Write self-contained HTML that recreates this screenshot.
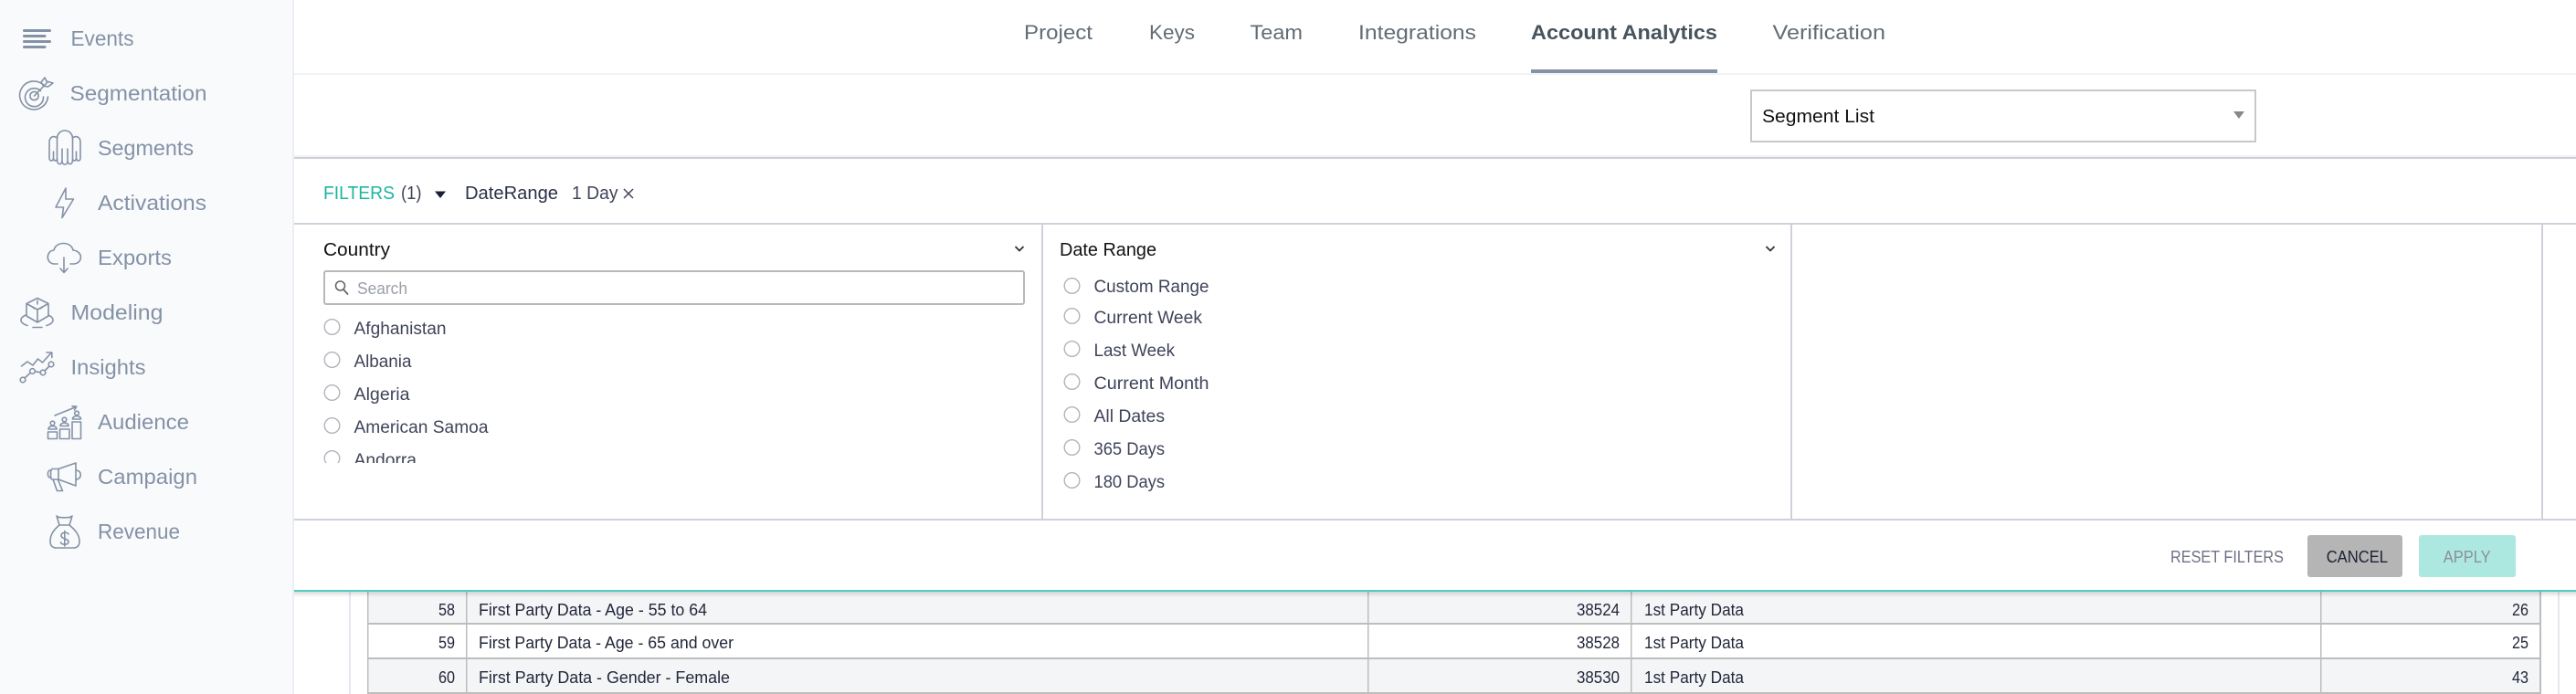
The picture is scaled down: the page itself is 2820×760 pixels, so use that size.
<!DOCTYPE html>
<html><head><meta charset="utf-8"><style>
html,body{margin:0;padding:0;background:#fff;width:2820px;height:760px;overflow:hidden}
svg{display:block}
text{font-family:"Liberation Sans",sans-serif}
.s{font-size:23px;fill:#8492a6}
.n{font-size:22px;fill:#616c75}
.d{font-size:19px;fill:#3f4459}
.t{font-size:18px;fill:#23273a}
.i{fill:none;stroke:#8492a6;stroke-width:1.6;stroke-linecap:round;stroke-linejoin:round}
.r{fill:#fff;stroke:#b0b3bb;stroke-width:1.4}
</style></head><body>
<svg xmlns="http://www.w3.org/2000/svg" width="2820" height="760" viewBox="0 0 2820 760">
<defs>
<linearGradient id="sh" x1="0" y1="0" x2="0" y2="1"><stop offset="0" stop-color="#000" stop-opacity=".14"/><stop offset="1" stop-color="#000" stop-opacity="0"/></linearGradient>
<clipPath id="cl"><rect x="340" y="340" width="790" height="167"/></clipPath>
</defs>
<rect width="2820" height="760" fill="#fff"/>
<!-- sidebar -->
<rect width="320" height="760" fill="#f9fafc"/>
<rect x="320" width="2" height="760" fill="#eceef2"/>

<!-- table -->
<rect x="402" y="648" width="2379" height="34" fill="#f4f5f7"/>
<rect x="402" y="722" width="2379" height="36" fill="#f4f5f7"/>
<g fill="#bdbdbd">
<rect x="402" y="682" width="2379" height="2"/><rect x="402" y="720" width="2379" height="2"/><rect x="402" y="758" width="2379" height="2"/>
<rect x="402" y="648" width="1.500" height="112"/><rect x="510" y="648" width="1.500" height="112"/><rect x="1497" y="648" width="1.500" height="112"/><rect x="1785" y="648" width="1.500" height="112"/><rect x="2540" y="648" width="1.500" height="112"/><rect x="2780" y="648" width="2" height="112"/>
</g>
<rect x="382" y="648" width="2" height="112" fill="#e4e7ee"/>
<rect x="2800" y="648" width="2" height="112" fill="#e4e7ee"/>
<g>
<text class="t" x="480" y="674" textLength="18" lengthAdjust="spacingAndGlyphs">58</text>
<text class="t" x="480" y="710" textLength="18" lengthAdjust="spacingAndGlyphs">59</text>
<text class="t" x="480" y="748" textLength="18" lengthAdjust="spacingAndGlyphs">60</text>
<text class="t" x="524" y="674" textLength="250" lengthAdjust="spacingAndGlyphs">First Party Data - Age - 55 to 64</text>
<text class="t" x="524" y="710" textLength="279" lengthAdjust="spacingAndGlyphs">First Party Data - Age - 65 and over</text>
<text class="t" x="524" y="748" textLength="275" lengthAdjust="spacingAndGlyphs">First Party Data - Gender - Female</text>
<text class="t" x="1726" y="674" textLength="47" lengthAdjust="spacingAndGlyphs">38524</text>
<text class="t" x="1726" y="710" textLength="47" lengthAdjust="spacingAndGlyphs">38528</text>
<text class="t" x="1726" y="748" textLength="47" lengthAdjust="spacingAndGlyphs">38530</text>
<text class="t" x="1800" y="674" textLength="109" lengthAdjust="spacingAndGlyphs">1st Party Data</text>
<text class="t" x="1800" y="710" textLength="109" lengthAdjust="spacingAndGlyphs">1st Party Data</text>
<text class="t" x="1800" y="748" textLength="109" lengthAdjust="spacingAndGlyphs">1st Party Data</text>
<text class="t" x="2750" y="674" textLength="18" lengthAdjust="spacingAndGlyphs">26</text>
<text class="t" x="2750" y="710" textLength="18" lengthAdjust="spacingAndGlyphs">25</text>
<text class="t" x="2750" y="748" textLength="18" lengthAdjust="spacingAndGlyphs">43</text>
</g>
<rect x="322" y="648" width="2498" height="6" fill="url(#sh)"/>
<rect x="322" y="646" width="2498" height="2" fill="#55cbbf"/>

<!-- sidebar text -->
<text class="s" x="77.500" y="50" textLength="69" lengthAdjust="spacingAndGlyphs">Events</text>
<text class="s" x="76.500" y="110" textLength="150" lengthAdjust="spacingAndGlyphs">Segmentation</text>
<text class="s" x="107" y="170" textLength="105" lengthAdjust="spacingAndGlyphs">Segments</text>
<text class="s" x="107" y="230" textLength="119" lengthAdjust="spacingAndGlyphs">Activations</text>
<text class="s" x="107" y="290" textLength="81" lengthAdjust="spacingAndGlyphs">Exports</text>
<text class="s" x="77.500" y="350" textLength="101" lengthAdjust="spacingAndGlyphs">Modeling</text>
<text class="s" x="77.500" y="410" textLength="82" lengthAdjust="spacingAndGlyphs">Insights</text>
<text class="s" x="107" y="470" textLength="100" lengthAdjust="spacingAndGlyphs">Audience</text>
<text class="s" x="107" y="530" textLength="109" lengthAdjust="spacingAndGlyphs">Campaign</text>
<text class="s" x="107" y="590" textLength="90" lengthAdjust="spacingAndGlyphs">Revenue</text>

<!-- sidebar icons -->
<path d="M26.500 33.500H54.500M26.500 39.500H49M26.500 45.500H54.500M26.500 51.500H49" fill="none" stroke="#8492a6" stroke-width="3" stroke-linecap="round"/>
<g class="i">
<path d="M49 94.500A15.500 15.500 0 1 0 52.500 106"/><path d="M44.500 99.500A10 10 0 1 0 47.500 106"/><circle cx="37.500" cy="105" r="4.600"/>
<path d="M37.500 105L52 90"/><path d="M45 90L49 85L51 89L58 91L52.500 95L47.500 94Z"/>
<path d="M62.500 176V152C62.500 140 79.500 140 79.500 152V176"/>
<path d="M62.500 175C62.500 181 67.500 181 68 176V163M68 176C68 181.500 74 181.500 74 176V163M74 176C74.500 181 79.500 181 79.500 175"/>
<path d="M62.500 151C58.500 148 54 150 54 156V173C54 177 58 177 58.500 173V166M58.500 173C59 177 62 176.500 62.500 174"/>
<path d="M79.500 151C83.500 148 88 150 88 156V173C88 177 84 177 83.500 173V166M83.500 173C83 177 80 176.500 79.500 174"/>
<path d="M72 206L61 227H69.500L68 238.500L80.500 218H72Z"/>
<path d="M63 289H59C50 288 50 275 59 274C61 264 78 264 80 274C91 275 91 288 81 289H77"/><path d="M70 282V298M66 294L70 298.500L74 294"/>
<path d="M41 326.500L53 332.500V346L41 353L29 346V332.500ZM29 332.500L41 339L53 332.500M41 339V353M41 329V333M35 336L38 338M47 336L44 338"/>
<path d="M28 345C20 349 22 354 30 356.500M53 345C61 349 59 354 51 356.500M36 358.500H46"/>
<path d="M23.500 401L30 396L36 400L41.500 393L46.500 397L56 386.500M51 386H56.800V391.500"/>
<circle cx="25" cy="416" r="2.800"/><circle cx="35.500" cy="406.500" r="2.800"/><circle cx="47" cy="408" r="2.800"/><circle cx="56" cy="399" r="2.800"/>
<path d="M27 414L33 408.500M38.300 406.800L44.500 407.800M49 406L54 401"/>
<path d="M60 455L83.500 445.500M79 444.800L83.800 445.200L81.500 449"/>
<rect x="52.500" y="473" width="10" height="7.500"/><rect x="65.500" y="470" width="10.500" height="10.500"/><rect x="79" y="462" width="9.500" height="18.500"/>
<circle cx="57.500" cy="463.500" r="2.300"/><path d="M53 470C53 465.500 62 465.500 62 470Z"/>
<circle cx="70.500" cy="459.500" r="2.300"/><path d="M66 466.500C66 462 75 462 75 466.500Z"/>
<circle cx="84" cy="452.500" r="2.300"/><path d="M79.500 459C79.500 454.500 88.500 454.500 88.500 459Z"/>
<path d="M57 513.500H64L83 507V532L64 525H57C55 525 55 514 57 513.500ZM64 513.500V525M83 515C90 515 90 525 83 525M55 515C51.500 515 51.500 523 55 523M58 525L62.500 537.500H68.500L63.500 525.500"/>
<path d="M62 565C65 568 68 566 70.500 567C73 566 76 568 79 565L76 575H65ZM65 575C58 581 55 586 55 593C55 598 58 600 62 600H80C84 600 87 598 87 593C87 586 83 581 76 575"/>
<path d="M75 585C74 582.500 67 582.500 67 586.500C67 590.500 75 589.500 75 593.500C75 597 68 597 66.500 594M70.800 581.500V598"/>
</g>

<!-- nav -->
<text class="n" x="1121" y="43" textLength="75" lengthAdjust="spacingAndGlyphs">Project</text>
<text class="n" x="1258" y="43" textLength="50" lengthAdjust="spacingAndGlyphs">Keys</text>
<text class="n" x="1368.500" y="43" textLength="57.500" lengthAdjust="spacingAndGlyphs">Team</text>
<text class="n" x="1487" y="43" textLength="129" lengthAdjust="spacingAndGlyphs">Integrations</text>
<text class="n" x="1676" y="43" textLength="204" lengthAdjust="spacingAndGlyphs" style="font-weight:700;fill:#47545d">Account Analytics</text>
<text class="n" x="1940.500" y="43" textLength="123.500" lengthAdjust="spacingAndGlyphs">Verification</text>
<rect x="322" y="80" width="2498" height="2" fill="#f1f2f3"/>
<rect x="1676" y="76" width="204" height="4" fill="#8492a6"/>

<!-- select -->
<rect x="1917" y="99" width="552" height="56" fill="#fff" stroke="#c8c8c8" stroke-width="2"/>
<text x="1929" y="134" font-size="20.500" fill="#111" textLength="123" lengthAdjust="spacingAndGlyphs">Segment List</text>
<path d="M2445 122H2457L2451 130Z" fill="#888"/>
<rect x="322" y="170" width="2498" height="2" fill="#f1f2f3"/>
<rect x="322" y="172" width="2498" height="2" fill="#cdd1d6"/>

<!-- filters bar -->
<text x="354" y="218" font-size="20" fill="#1eb5a0" textLength="78" lengthAdjust="spacingAndGlyphs">FILTERS</text>
<text x="439" y="218" font-size="20" fill="#3f4459" textLength="22.500" lengthAdjust="spacingAndGlyphs">(1)</text>
<path d="M476 209.500H488L482 217Z" fill="#1a1f36"/>
<text x="509" y="218" font-size="20" fill="#2b3048" textLength="102" lengthAdjust="spacingAndGlyphs">DateRange</text>
<text x="626" y="218" font-size="20" fill="#3f4459" textLength="50.500" lengthAdjust="spacingAndGlyphs">1 Day</text>
<path d="M683 207L693 217M693 207L683 217" stroke="#3f4459" stroke-width="1.500" fill="none"/>
<rect x="322" y="244" width="2498" height="2" fill="#cfd1da"/>
<rect x="1140" y="246" width="2" height="322" fill="#cfd1da"/>
<rect x="1960" y="246" width="2" height="322" fill="#cfd1da"/>
<rect x="2782" y="246" width="2" height="322" fill="#cfd1da"/>
<rect x="322" y="568" width="2498" height="2" fill="#cfd1da"/>

<!-- country -->
<text x="354" y="280" font-size="20" fill="#111" textLength="73" lengthAdjust="spacingAndGlyphs">Country</text>
<path d="M1111.500 270L1116 274.500L1120.500 270" fill="none" stroke="#333" stroke-width="1.800"/>
<rect x="355" y="297" width="766" height="36" rx="2" fill="#fff" stroke="#b8b8b8" stroke-width="2"/>
<circle cx="372.500" cy="313" r="5" fill="none" stroke="#666" stroke-width="1.600"/><path d="M376 317L381 322.500" stroke="#666" stroke-width="1.800"/>
<text x="391" y="322" font-size="18" fill="#9a9ea8" textLength="55" lengthAdjust="spacingAndGlyphs">Search</text>
<g clip-path="url(#cl)">
<circle class="r" cx="363.500" cy="358" r="8.300"/><circle class="r" cx="363.500" cy="394" r="8.300"/><circle class="r" cx="363.500" cy="430" r="8.300"/><circle class="r" cx="363.500" cy="466" r="8.300"/><circle class="r" cx="363.500" cy="502" r="8.300"/>
<text class="d" x="387.500" y="366" textLength="101" lengthAdjust="spacingAndGlyphs">Afghanistan</text>
<text class="d" x="387.500" y="402" textLength="63" lengthAdjust="spacingAndGlyphs">Albania</text>
<text class="d" x="387.500" y="438" textLength="61" lengthAdjust="spacingAndGlyphs">Algeria</text>
<text class="d" x="387.500" y="474" textLength="147" lengthAdjust="spacingAndGlyphs">American Samoa</text>
<text class="d" x="387.500" y="510" textLength="68.500" lengthAdjust="spacingAndGlyphs">Andorra</text>
</g>

<!-- date range -->
<text x="1160" y="280" font-size="20" fill="#111" textLength="106" lengthAdjust="spacingAndGlyphs">Date Range</text>
<path d="M1933.500 270L1938 274.500L1942.500 270" fill="none" stroke="#333" stroke-width="1.800"/>
<circle class="r" cx="1173.500" cy="313" r="8.300"/><circle class="r" cx="1173.500" cy="346" r="8.300"/><circle class="r" cx="1173.500" cy="382" r="8.300"/><circle class="r" cx="1173.500" cy="418" r="8.300"/><circle class="r" cx="1173.500" cy="454" r="8.300"/><circle class="r" cx="1173.500" cy="490" r="8.300"/><circle class="r" cx="1173.500" cy="526" r="8.300"/>
<text class="d" x="1197.500" y="320" textLength="126" lengthAdjust="spacingAndGlyphs">Custom Range</text>
<text class="d" x="1197.500" y="354" textLength="118.500" lengthAdjust="spacingAndGlyphs">Current Week</text>
<text class="d" x="1197.500" y="390" textLength="88.500" lengthAdjust="spacingAndGlyphs">Last Week</text>
<text class="d" x="1197.500" y="426" textLength="126" lengthAdjust="spacingAndGlyphs">Current Month</text>
<text class="d" x="1197.500" y="462" textLength="77.500" lengthAdjust="spacingAndGlyphs">All Dates</text>
<text class="d" x="1197.500" y="498" textLength="77.500" lengthAdjust="spacingAndGlyphs">365 Days</text>
<text class="d" x="1197.500" y="534" textLength="77.500" lengthAdjust="spacingAndGlyphs">180 Days</text>

<!-- footer -->
<text x="2376" y="616" font-size="18" fill="#6f7185" textLength="124" lengthAdjust="spacingAndGlyphs">RESET FILTERS</text>
<rect x="2526" y="586" width="104" height="46" rx="3" fill="#b5b5b5"/>
<text x="2546.700" y="616" font-size="18" fill="#1c2033" textLength="67.300" lengthAdjust="spacingAndGlyphs">CANCEL</text>
<rect x="2648" y="586" width="106" height="46" rx="3" fill="#ace8e0"/>
<text x="2674.700" y="616" font-size="18" fill="#8b8f9b" textLength="52" lengthAdjust="spacingAndGlyphs">APPLY</text>
</svg>
</body></html>
